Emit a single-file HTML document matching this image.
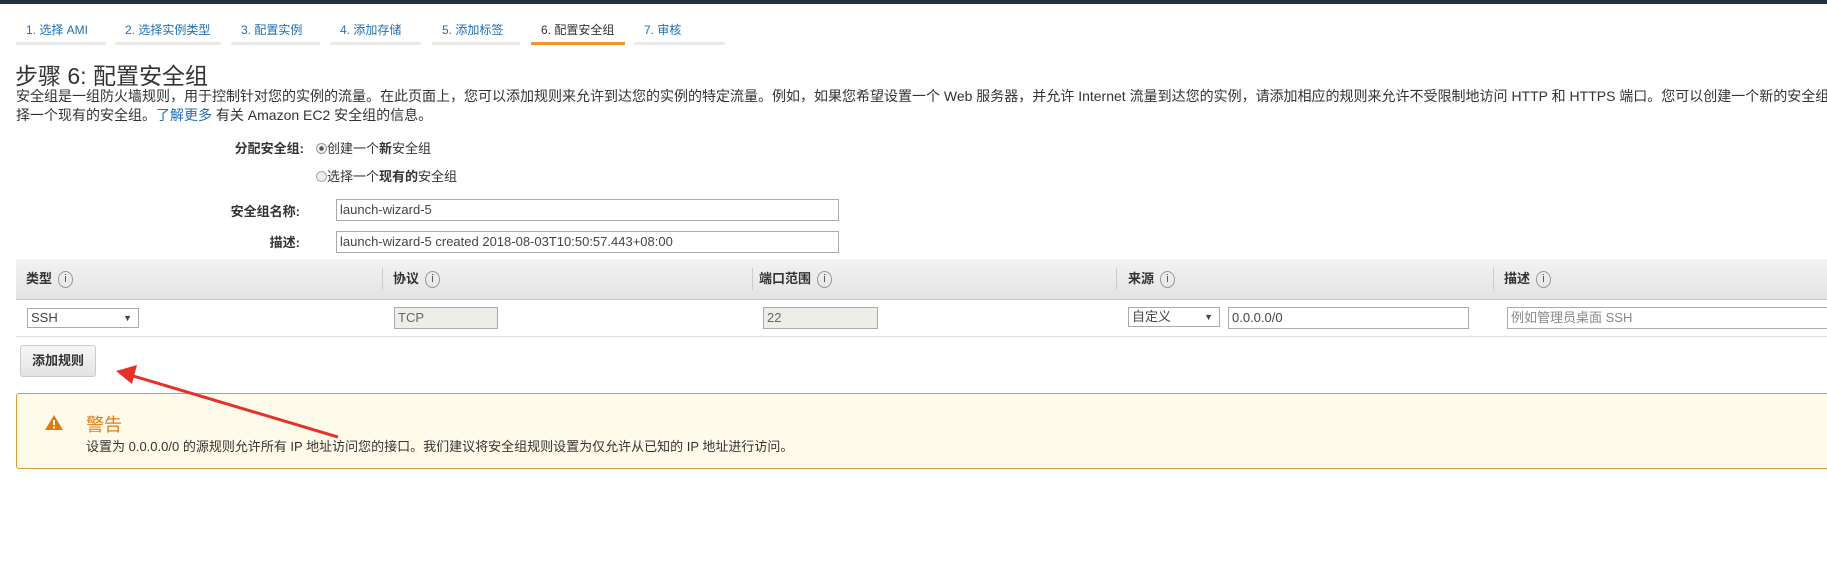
<!DOCTYPE html>
<html><head><meta charset="utf-8"><style>
*{box-sizing:border-box;margin:0;padding:0}
body{width:1827px;height:574px;overflow:hidden;background:#fff;font-family:"Liberation Sans","Noto Sans CJK SC",sans-serif;color:#333;position:relative;font-size:13px}
.a{position:absolute;white-space:nowrap}
.tab{position:absolute;top:18px;height:27px;border-bottom:3px solid #eaeaea;font-size:12px;color:#1f6fb5;padding-left:10px;line-height:24px}
.tab.on{border-bottom-color:#f0962a;color:#333}
.inp{position:absolute;border:1px solid #aaa;background:#fff;height:22px;font-size:13px;line-height:20px;padding-left:3px;color:#444}
.dis{background:#eeeee8;color:#666}
.hd{position:absolute;top:278px;transform:translateY(-50%);font-size:13px;font-weight:bold;color:#333}
.i{display:inline-block;width:15px;height:17px;border:1px solid #999;border-radius:50%;font-size:11px;line-height:15px;text-align:center;color:#555;margin-left:6px;font-weight:normal;vertical-align:middle}
.sep{position:absolute;top:268px;width:1px;height:22px;background:#ccc}
</style></head><body>
<div class="a" style="left:0;top:0;width:1827px;height:4px;background:#232f3e"></div>
<div class="tab" style="left:16px;width:90px">1. 选择 AMI</div>
<div class="tab" style="left:115px;width:106px">2. 选择实例类型</div>
<div class="tab" style="left:231px;width:89px">3. 配置实例</div>
<div class="tab" style="left:330px;width:91px">4. 添加存储</div>
<div class="tab" style="left:432px;width:88px">5. 添加标签</div>
<div class="tab on" style="left:531px;width:94px">6. 配置安全组</div>
<div class="tab" style="left:634px;width:91px">7. 审核</div>
<div class="a" style="left:15px;top:57px;font-size:23px;color:#333">步骤 6: 配置安全组</div>
<div class="a" style="left:16px;top:87px;font-size:14px;line-height:19px;width:1811px;overflow:hidden">安全组是一组防火墙规则，用于控制针对您的实例的流量。在此页面上，您可以添加规则来允许到达您的实例的特定流量。例如，如果您希望设置一个 Web 服务器，并允许 Internet 流量到达您的实例，请添加相应的规则来允许不受限制地访问 HTTP 和 HTTPS 端口。您可以创建一个新的安全组或从下面选<br>择一个现有的安全组。<span style="color:#1f6fb5">了解更多</span> 有关 Amazon EC2 安全组的信息。</div>
<div class="a" style="right:1523px;top:138px;font-weight:bold">分配安全组:</div>
<div class="a" style="left:316px;top:138px"><span style="display:inline-block;width:11px;height:11px;border:1px solid #999;border-radius:50%;background:radial-gradient(#555 30%,#eee 40%);vertical-align:-1px"></span>创建一个<b>新</b>安全组</div>
<div class="a" style="left:316px;top:166px"><span style="display:inline-block;width:11px;height:11px;border:1px solid #aaa;border-radius:50%;background:#eee;vertical-align:-1px"></span>选择一个<b>现有的</b>安全组</div>
<div class="a" style="right:1527px;top:201px;font-weight:bold">安全组名称:</div>
<div class="inp" style="left:336px;top:199px;width:503px">launch-wizard-5</div>
<div class="a" style="right:1527px;top:232px;font-weight:bold">描述:</div>
<div class="inp" style="left:336px;top:231px;width:503px">launch-wizard-5 created 2018-08-03T10:50:57.443+08:00</div>
<div class="a" style="left:16px;top:259px;width:1811px;height:41px;background:linear-gradient(#f2f2f2,#e4e4e4);border-bottom:1px solid #ccc"></div>
<div class="sep" style="left:382px"></div><div class="sep" style="left:752px"></div><div class="sep" style="left:1116px"></div><div class="sep" style="left:1493px"></div>
<div class="hd" style="left:26px">类型<span class="i">i</span></div>
<div class="hd" style="left:393px">协议<span class="i">i</span></div>
<div class="hd" style="left:759px">端口范围<span class="i">i</span></div>
<div class="hd" style="left:1128px">来源<span class="i">i</span></div>
<div class="hd" style="left:1504px">描述<span class="i">i</span></div>
<div class="inp" style="left:27px;top:308px;width:112px;height:20px;line-height:18px">SSH<span style="position:absolute;right:6px;font-size:9px">▼</span></div>
<div class="inp dis" style="left:394px;top:307px;width:104px">TCP</div>
<div class="inp dis" style="left:763px;top:307px;width:115px">22</div>
<div class="inp" style="left:1128px;top:307px;width:92px;height:20px;line-height:18px">自定义<span style="position:absolute;right:6px;font-size:9px">▼</span></div>
<div class="inp" style="left:1228px;top:307px;width:241px">0.0.0.0/0</div>
<div class="inp" style="left:1507px;top:307px;width:330px;color:#888">例如管理员桌面 SSH</div>
<div class="a" style="left:16px;top:336px;width:1811px;height:1px;background:#ddd"></div>
<div class="a" style="left:20px;top:345px;width:76px;height:32px;border:1px solid #ccc;border-radius:3px;background:linear-gradient(#f7f7f7,#e3e3e3);font-weight:bold;text-align:center;line-height:30px">添加规则</div>
<div class="a" style="left:16px;top:393px;width:1830px;height:76px;background:#fffbeb;border:1px solid #d89b3c;border-radius:3px"></div>
<svg class="a" style="left:44px;top:414px" width="20" height="17" viewBox="0 0 20 17"><path d="M10 1 L19 16 L1 16 Z" fill="#e07b13"/><rect x="9" y="6" width="2" height="5" fill="#fff"/><rect x="9" y="12.5" width="2" height="2" fill="#fff"/></svg>
<div class="a" style="left:86px;top:411px;font-size:18px;color:#e07b13">警告</div>
<div class="a" style="left:86px;top:436px">设置为 0.0.0.0/0 的源规则允许所有 IP 地址访问您的接口。我们建议将安全组规则设置为仅允许从已知的 IP 地址进行访问。</div>
<svg class="a" style="left:0;top:0" width="1827" height="574"><line x1="338" y1="437" x2="130" y2="375" stroke="#e8302a" stroke-width="3"/><path d="M116 371 L137 365 L132 384 Z" fill="#e8302a"/></svg>
</body></html>
